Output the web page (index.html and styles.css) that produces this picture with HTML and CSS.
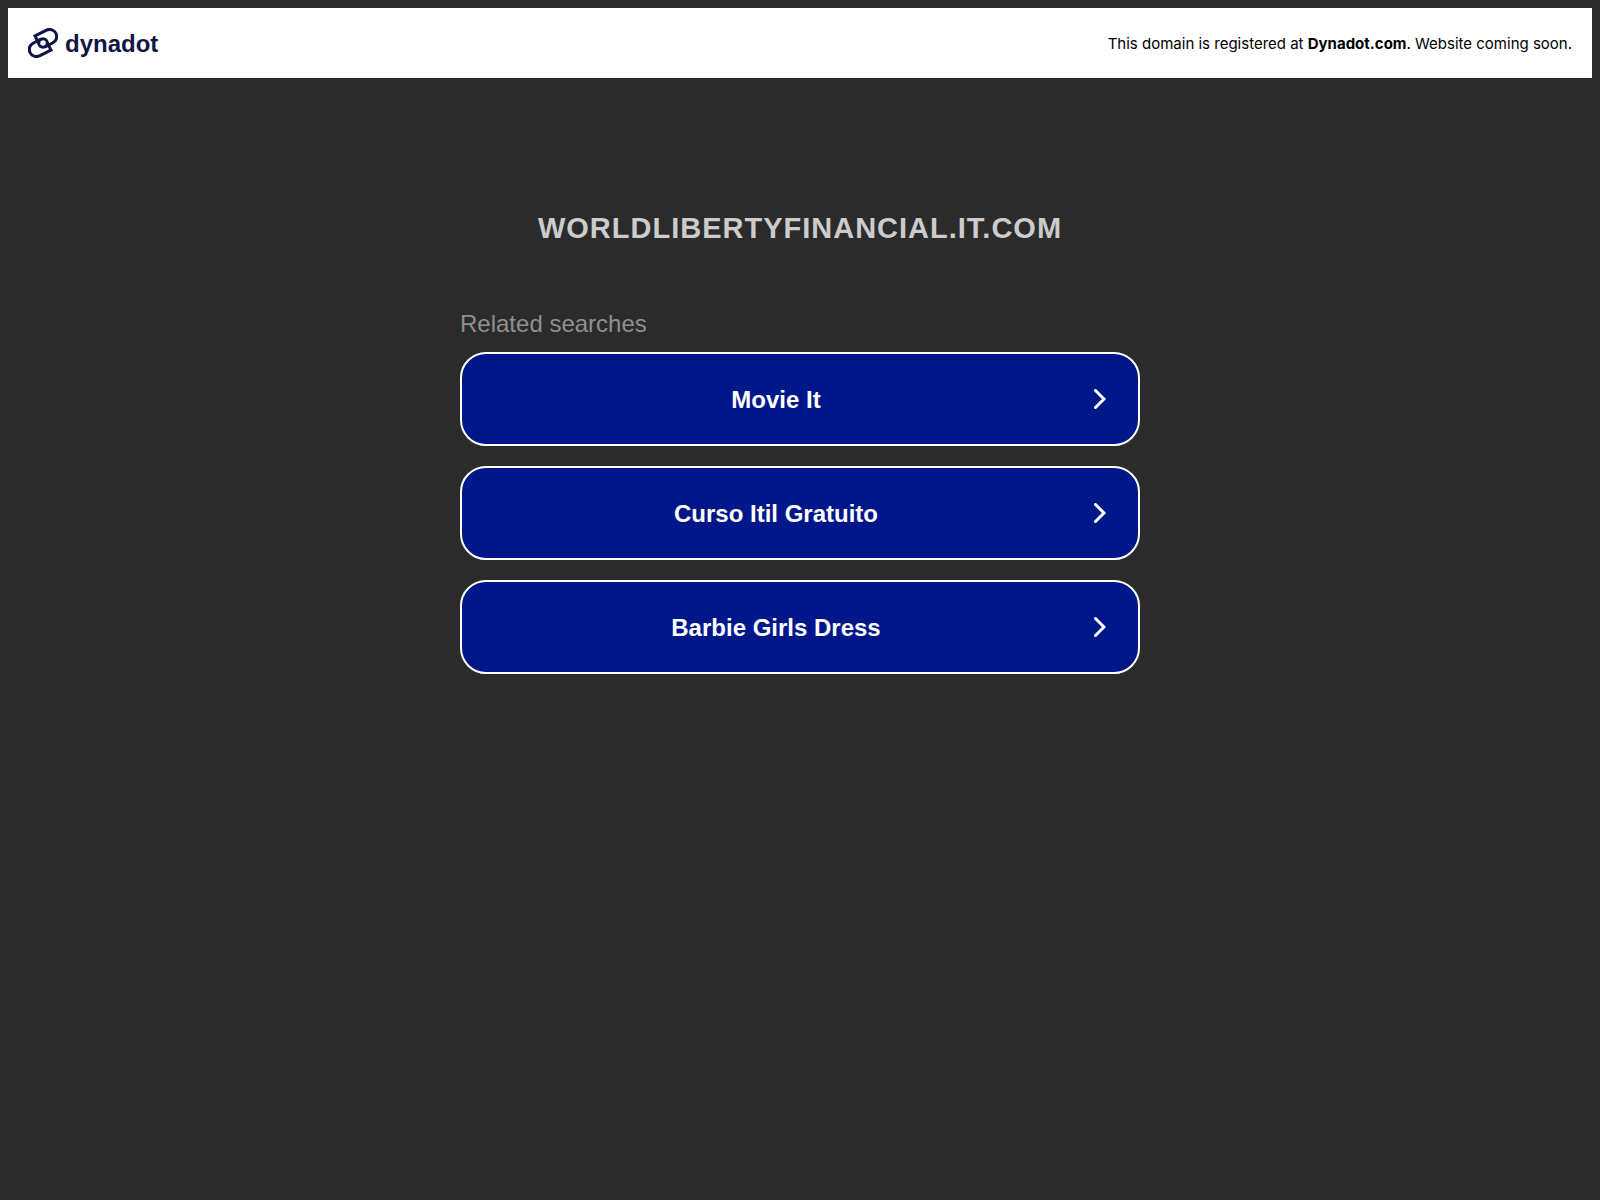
FILE: index.html
```html
<!DOCTYPE html>
<html lang="en">
<head>
    <meta charset="UTF-8">
    <meta name="viewport" content="width=device-width, initial-scale=1.0">
    <title>worldlibertyfinancial.it.com</title>
    <link rel="stylesheet" href="styles.css">
</head>
<body>

    <!-- Registrar banner -->
    <header class="banner">
        <a class="logo" href="#">
            <svg class="logo-mark" viewBox="0 0 30 30" fill="none" stroke="currentColor" stroke-width="3" aria-hidden="true">
                <path d="M11 15.5 L7 8 L18 2.3 C22 0.3 26.500 2 28 5.500 C29.500 9.500 28 13 24.500 15 L17 18.800"/>
                <path d="M19 14.500 L23 22 L12 27.700 C8 29.700 3.500 28 2 24.500 C0.500 20.500 2 17 5.500 15 L13 11.200"/>
                <circle cx="15" cy="15" r="4.300"/>
            </svg>
            <span class="logo-text">dynadot</span>
        </a>
        <p class="notice">This domain is registered at <a href="#">Dynadot.com</a>. Website coming soon.</p>
    </header>

    <main class="content">
        <h1>worldlibertyfinancial.it.com</h1>

        <!-- Related searches -->
        <section class="searches">
            <h2>Related searches</h2>
            <a class="search-link" href="#">
                <span>Movie It</span>
                <svg class="chevron" viewBox="0 0 12 20" aria-hidden="true"><path d="M1.500 1.500 L10 10 L1.500 18.500"/></svg>
            </a>
            <a class="search-link" href="#">
                <span>Curso Itil Gratuito</span>
                <svg class="chevron" viewBox="0 0 12 20" aria-hidden="true"><path d="M1.500 1.500 L10 10 L1.500 18.500"/></svg>
            </a>
            <a class="search-link" href="#">
                <span>Barbie Girls Dress</span>
                <svg class="chevron" viewBox="0 0 12 20" aria-hidden="true"><path d="M1.500 1.500 L10 10 L1.500 18.500"/></svg>
            </a>
        </section>
    </main>

</body>
</html>
```
FILE: styles.css
```css
* {
    box-sizing: border-box;
}

body {
    font-family: Arial, "Liberation Sans", sans-serif;
    margin: 8px;
    background-color: #2b2b2b;
    color: white;
}

a {
    color: inherit;
    text-decoration: none;
}

.banner {
    display: flex;
    justify-content: space-between;
    align-items: center;
    min-height: 70px;
    padding: 0 20px;
    background-color: white;
    color: black;
}

.logo {
    display: flex;
    align-items: center;
    gap: 7px;
    color: #0f1646;
}

.logo-mark {
    width: 30px;
    height: 30px;
}

.logo-text {
    padding-top: 2px;
    font-size: 24px;
    font-weight: bold;
}

.notice {
    margin: 0;
    font-family: Inter, "Liberation Sans", sans-serif;
    font-size: 15px;
}

.notice a {
    font-weight: bold;
}

.content {
    max-width: 680px;
    margin: 0 auto;
    padding-top: 130px;
}

h1 {
    margin: 0 0 62px;
    font-size: 29px;
    line-height: 40px;
    letter-spacing: 1px;
    text-align: center;
    text-transform: uppercase;
    color: #cccccc;
}

h2 {
    margin: 0 0 14px;
    font-size: 24px;
    font-weight: normal;
    line-height: 28px;
    color: #8f8f8f;
}

.search-link {
    display: flex;
    align-items: center;
    min-height: 94px;
    margin-bottom: 20px;
    padding: 0 32px 0 2px;
    border: 2px solid white;
    border-radius: 26px;
    background-color: #00178a;
    font-size: 24px;
    font-weight: bold;
}

.search-link span {
    flex: 1;
    padding-top: 2px;
    padding-right: 6px;
    text-align: center;
}

.chevron {
    width: 12px;
    height: 20px;
    fill: none;
    stroke: white;
    stroke-width: 3;
    stroke-linecap: round;
}
```
